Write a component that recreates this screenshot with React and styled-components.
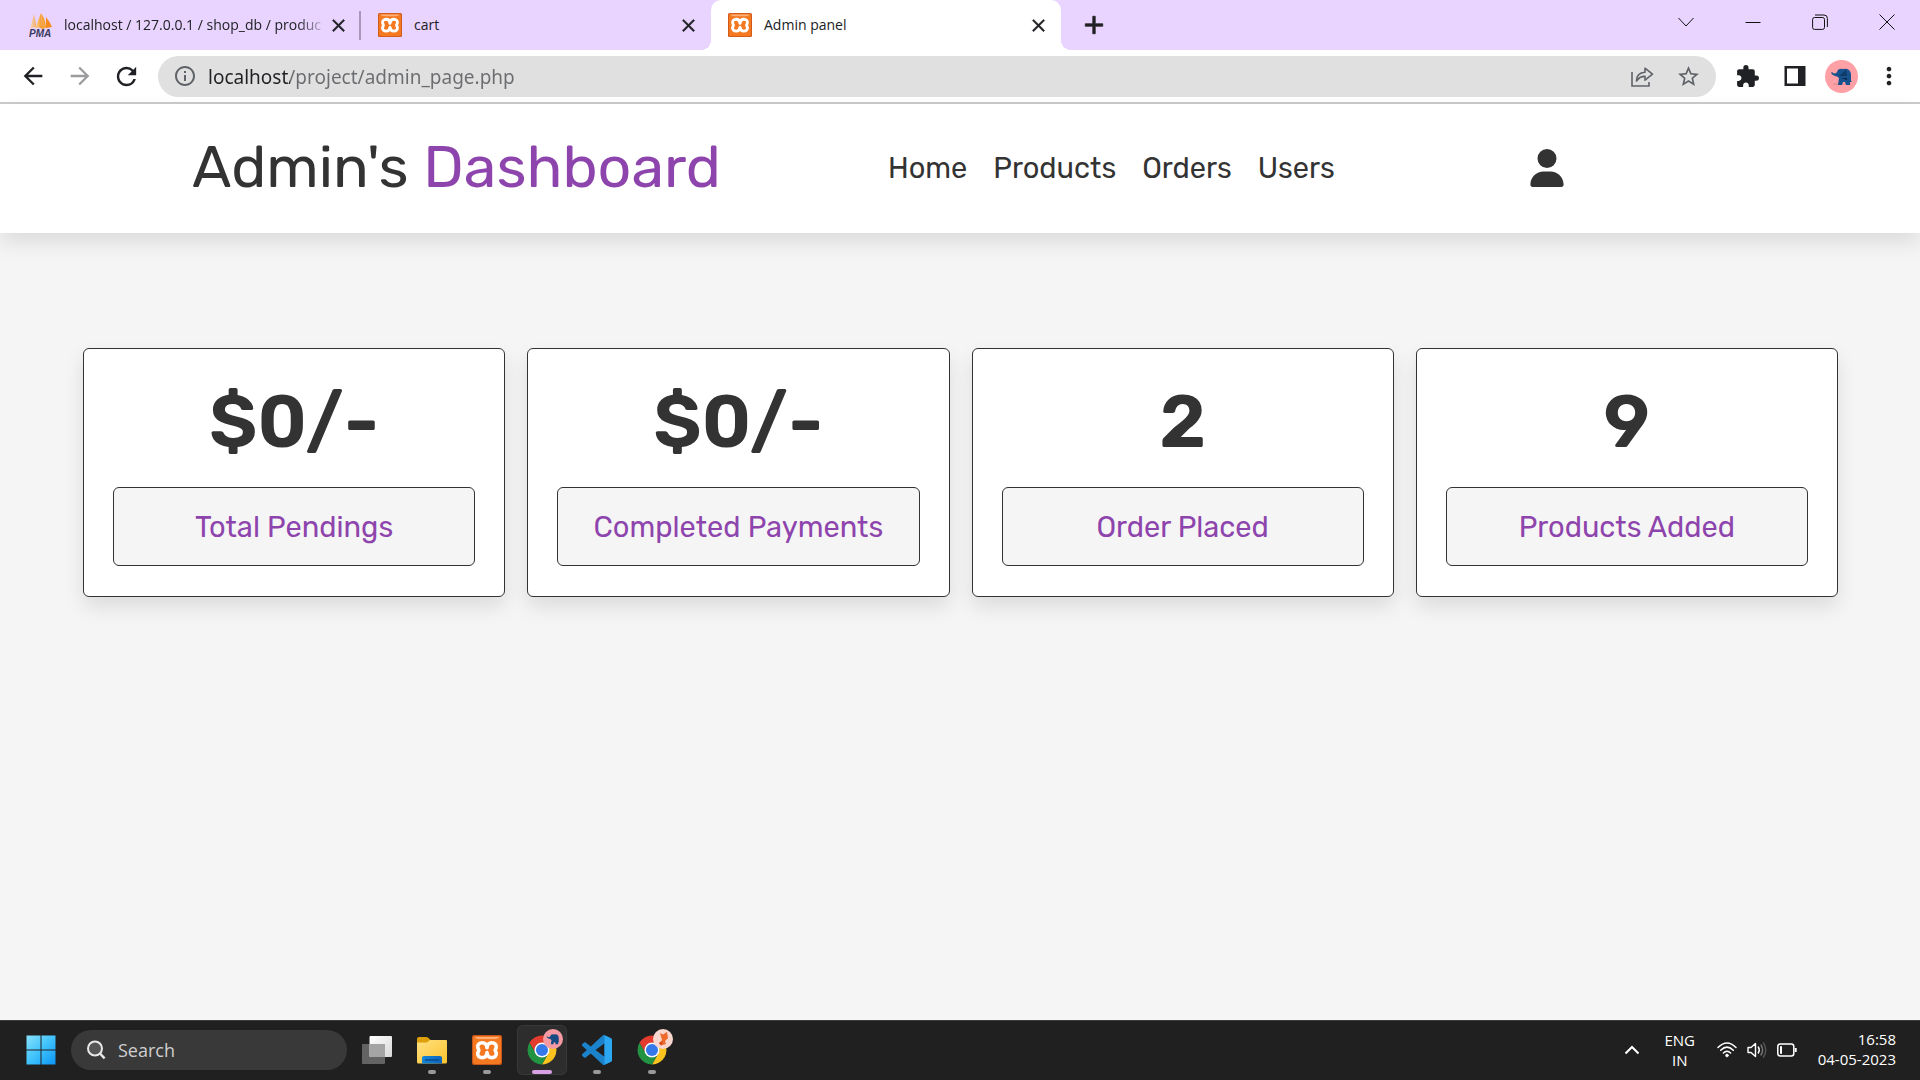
import React from "react";
import styled, { createGlobalStyle, css } from "styled-components";
import {
  MdArrowBack,
  MdArrowForward,
  MdRefresh,
  MdInfoOutline,
  MdStarBorder,
  MdExtension,
  MdMoreVert,
  MdClose,
  MdAdd,
} from "react-icons/md";
import { FaUser } from "react-icons/fa6";

const SYSTEM_FONT = `"Segoe UI", "Open Sans", "Noto Sans", sans-serif`;
const ADDRESS_FONT = `"Segoe UI", "Noto Sans", sans-serif`;
const PAGE_FONT = `"Rubik", "Roboto", sans-serif`;

const GlobalStyle = createGlobalStyle`
  *, *::before, *::after { box-sizing: border-box; }
  body { margin: 0; font-family: ${SYSTEM_FONT}; background: #f5f5f5; }
  button, input { font: inherit; color: inherit; }
  button { border: 0; padding: 0; background: none; cursor: pointer; }
  a { color: inherit; text-decoration: none; }
  svg { display: block; flex: none; }
`;

const Screen = styled.div`
  display: flex;
  flex-direction: column;
  min-height: 100vh;
`;

/* ---------- Browser tabs ---------- */

const TabStrip = styled.div`
  display: flex;
  align-items: stretch;
  height: 50px;
  padding-left: 11px;
  background: #e8d4ff;
`;

const TabBox = styled.div`
  position: relative;
  display: flex;
  align-items: center;
  flex: 0 1 350px;
  min-width: 0;
  gap: 4px;
  padding: 0 11px 0 17px;
  ${({ $divided }) =>
    $divided &&
    css`
      &::after {
        content: "";
        position: absolute;
        right: 0;
        top: 11px;
        width: 2px;
        height: 29px;
        background: #a898bb;
      }
    `}
  ${({ $active }) =>
    $active &&
    css`
      background: #fff;
      border-radius: 10px 10px 0 0;
      &::before,
      &::after {
        content: "";
        position: absolute;
        bottom: 0;
        width: 10px;
        height: 10px;
      }
      &::before {
        left: -10px;
        background: radial-gradient(circle at 0 0, transparent 10px, #fff 10px);
      }
      &::after {
        right: -10px;
        background: radial-gradient(circle at 100% 0, transparent 10px, #fff 10px);
      }
    `}
`;

const TabTitle = styled.span`
  flex: 1;
  min-width: 0;
  padding-left: 8px;
  overflow: hidden;
  white-space: nowrap;
  font-size: 14px;
  line-height: 20px;
  color: #202124;
  ${({ $faded }) =>
    $faded &&
    css`
      mask-image: linear-gradient(90deg, #000 calc(100% - 24px), rgba(0, 0, 0, 0.2));
    `}
`;

const SmallButton = styled.button`
  display: grid;
  place-items: center;
  width: 24px;
  height: 24px;
  flex: none;
  color: #202124;
  path:last-child {
    stroke: currentColor;
    stroke-width: 0.6px;
  }
`;

const NewTabButton = styled(SmallButton)`
  align-self: center;
  width: 30px;
  height: 30px;
  margin-left: 18px;
`;

const WindowControls = styled.div`
  display: flex;
  align-items: flex-start;
  margin-left: auto;
`;

const WindowButton = styled.button`
  display: grid;
  place-items: center;
  width: 67px;
  height: 43px;
  color: #111;
`;

/* ---------- Browser toolbar ---------- */

const Toolbar = styled.div`
  display: flex;
  align-items: center;
  gap: 8px;
  height: 54px;
  padding: 0 8px 0 9px;
  background: #fff;
  border-bottom: 2px solid #cbcbcb;
`;

const ToolGroup = styled.div`
  display: flex;
`;

const toolColors = { strong: "#202124", soft: "#5f6368", disabled: "#9c9c9e" };

const ToolButton = styled.button`
  display: grid;
  place-items: center;
  width: 47px;
  height: 40px;
  color: ${({ $tone = "strong" }) => toolColors[$tone]};
`;

const AddressBar = styled.form`
  display: flex;
  align-items: center;
  flex: 1;
  min-width: 0;
  height: 41px;
  padding: 0 4px 0 15px;
  border-radius: 21px;
  background: #e0e0e0;
  color: #5f6368;
`;

const AddressInput = styled.input`
  flex: 1;
  min-width: 0;
  height: 32px;
  margin-left: 11px;
  padding: 2px 0 0;
  border: 0;
  outline: 0;
  font-family: ${ADDRESS_FONT};
  font-size: 19px;
  color: transparent;
  background: linear-gradient(90deg, #202124 82px, #6b6c6f 82px);
  background-clip: text;
  -webkit-background-clip: text;
`;

/* ---------- Admin page ---------- */

const Page = styled.div`
  display: flex;
  flex-direction: column;
  flex: 1;
  background: #f5f5f5;
  font-family: ${PAGE_FONT};
  color: #333;
`;

const Header = styled.header`
  display: flex;
  align-items: center;
  justify-content: space-between;
  padding: 24px 354px 26px 192px;
  background: #fff;
  box-shadow: 0 10px 20px rgba(0, 0, 0, 0.1);
`;

const Logo = styled.a`
  font-size: 59px;
  line-height: 79px;
  white-space: nowrap;
  span {
    color: #8e44ad;
  }
`;

const Nav = styled.nav`
  display: flex;
`;

const NavLink = styled.a`
  margin-right: 26px;
  font-size: 29px;
  line-height: 36px;
`;

const UserButton = styled.button`
  color: #333;
`;

const Stats = styled.main`
  display: grid;
  grid-template-columns: repeat(4, 1fr);
  gap: 22px;
  padding: 115px 82px 40px 83px;
`;

const Card = styled.section`
  padding: 29px 29px 30px;
  border: 1px solid #333;
  border-radius: 6px;
  background: #fff;
  box-shadow: 0 10px 20px rgba(0, 0, 0, 0.1);
  text-align: center;
`;

const Value = styled.h3`
  margin: 0 0 20px;
  font-size: 74px;
  font-weight: 600;
  line-height: 89px;
`;

const Label = styled.p`
  margin: 0;
  padding: 21px 0 20px;
  border: 1px solid #333;
  border-radius: 6px;
  background: #f5f5f5;
  color: #8e44ad;
  font-size: 29px;
  line-height: 36px;
  white-space: nowrap;
`;

/* ---------- Taskbar ---------- */

const Taskbar = styled.footer`
  display: flex;
  align-items: center;
  gap: 5px;
  height: 60px;
  padding: 0 24px 1px 16px;
  background: #202020;
  border-top: 1px solid #3a3d3e;
  color: #fff;
`;

const TaskButton = styled.button`
  position: relative;
  display: grid;
  place-items: center;
  width: 50px;
  height: 50px;
  border-radius: 6px;
  background: ${({ $active }) => ($active ? "#2d2d2d" : "none")};
  box-shadow: ${({ $active }) => ($active ? "inset 0 0 0 1px #383838" : "none")};
  ${({ $running, $active }) =>
    $running &&
    css`
      &::after {
        content: "";
        position: absolute;
        bottom: 1px;
        left: 50%;
        width: ${$active ? 20 : 8}px;
        height: 4px;
        border-radius: 2px;
        background: ${$active ? "#d9a0e6" : "#999"};
        transform: translateX(-50%);
      }
    `}
`;

const SearchBox = styled.label`
  display: flex;
  align-items: center;
  gap: 12px;
  width: 276px;
  height: 40px;
  padding: 0 15px;
  border-radius: 20px;
  background: #393939;
  input {
    flex: 1;
    min-width: 0;
    padding: 0;
    border: 0;
    outline: 0;
    background: none;
    font-size: 18px;
  }
  input::placeholder {
    color: #cfcfcf;
    opacity: 1;
  }
`;

const Tray = styled.div`
  display: flex;
  align-items: center;
  gap: 16px;
  margin-left: auto;
  font-size: 15px;
  line-height: 20px;
`;

const TrayButton = styled.button`
  display: flex;
  align-items: center;
  justify-content: center;
  gap: 10px;
  min-width: 32px;
  height: 40px;
  padding: ${({ $wide }) => ($wide ? "0 5px" : "0")};
  line-height: 20px;
`;

const Clock = styled.time`
  padding-bottom: 2px;
  text-align: right;
`;

/* ---------- Drawings ---------- */

const PmaIcon = () => (
  <svg width="24" height="26" viewBox="0 0 24 26" aria-hidden="true">
    <defs>
      <linearGradient id="sail" x1="0" x2="1">
        <stop offset="0" stopColor="#fbd9a0" />
        <stop offset="1" stopColor="#f7941d" />
      </linearGradient>
    </defs>
    <path d="M6 2 L2 17 Q6 14 9 16 Z" fill="url(#sail)" opacity="0.7" />
    <path d="M13 1 L7 17 Q11 14 14 17 Z" fill="url(#sail)" />
    <path d="M13 1 Q18 8 18 16 L14 17 Z" fill="#f9a33c" />
    <path d="M18 5 Q22 10 24 15 L18 16 Z" fill="#f58a1f" />
    <text x="1" y="25" fontSize="10" fontWeight="700" fontStyle="italic" fontFamily="Liberation Sans, sans-serif" fill="#3a3a5c">
      PMA
    </text>
  </svg>
);

const XamppIcon = ({ size = 24 }) => (
  <svg width={size} height={size} viewBox="0 0 30 30" aria-hidden="true">
    <rect width="30" height="30" rx="2" fill="#c8541a" />
    <rect x="1" y="1" width="28" height="28" rx="2" fill="#f47920" />
    <path d="M3 2 H27 Q26 4 22 4 H8 Q4 4 3 2 Z" fill="#fbb07a" />
    <path
      d="M15 12.8 C14.6 9.4 13 7.8 10.4 7.8 C7 7.8 5.2 10 5.8 12.6 C6.1 13.8 6.8 14.2 6.8 15.2 C6.8 16.2 6.1 16.6 5.8 17.8 C5.2 20.4 7 22.6 10.4 22.6 C13 22.6 14.6 21 15 17.6 C15.4 21 17 22.6 19.6 22.6 C23 22.6 24.8 20.4 24.2 17.8 C23.9 16.6 23.2 16.2 23.2 15.2 C23.2 14.2 23.9 13.8 24.2 12.6 C24.8 10 23 7.8 19.6 7.8 C17 7.8 15.4 9.4 15 12.8 Z"
      fill="none"
      stroke="#fff"
      strokeWidth="3.6"
      strokeLinejoin="round"
    />
  </svg>
);

const elephantPath =
  "M7 12 Q10 15 12 12 Q13 8 18 9 Q25 8 26 14 L26 21 L27 22 L25 22 L25 25 L21 25 L20 22 L18 22 L17 25 L13 25 L14 18 Q12 16 10 16 Q7 15 6 13 Z";

const ProfileIcon = () => (
  <svg width="33" height="33" viewBox="0 0 33 33" aria-hidden="true">
    <circle cx="16.5" cy="16.5" r="16.5" fill="#ffa0a6" />
    <path d="M8 24 H26" stroke="#d9868e" strokeWidth="1" />
    <path d={elephantPath} fill="#17528f" />
    <path d="M14 16 L21 10 L22 16 Z" fill="#0f3a68" />
    <path d="M16 18 H22 V20 Z" fill="#0b2747" />
  </svg>
);

const ShareIcon = () => (
  <svg width="24" height="24" viewBox="0 0 24 24" fill="none" stroke="currentColor" strokeWidth="1.6" aria-hidden="true">
    <path d="M2 8 V22 H19 V18" />
    <path d="M6.5 17 C6.5 11.5 10 8.6 15 8.3 V4.2 L22.5 10.2 L15 16.2 V12.4 C11.5 12.2 8.8 13.6 6.5 17 Z" strokeLinejoin="round" />
  </svg>
);

const SidePanelIcon = () => (
  <svg width="22" height="22" viewBox="0 0 22 22" aria-hidden="true">
    <path fillRule="evenodd" fill="currentColor" d="M0.5 1 H21.5 V21 H0.5 Z M3 3.5 V18.5 H14 V3.5 Z" />
  </svg>
);

const LineIcon = ({ d, size = 16 }) => (
  <svg width={size} height={size} viewBox="0 0 16 16" fill="none" stroke="currentColor" strokeWidth="1" aria-hidden="true">
    <path d={d} />
  </svg>
);

const WindowsIcon = () => (
  <svg width="30" height="30" viewBox="0 0 30 30" aria-hidden="true">
    <defs>
      <linearGradient id="winblue" gradientUnits="userSpaceOnUse" x1="0" y1="0" x2="30" y2="30">
        <stop offset="0" stopColor="#8be2fd" />
        <stop offset="0.5" stopColor="#3fc2fb" />
        <stop offset="1" stopColor="#0a93f5" />
      </linearGradient>
    </defs>
    <path fill="url(#winblue)" d="M0.5 0.5 H14.5 V14.5 H0.5 Z M15.5 0.5 H29.5 V14.5 H15.5 Z M0.5 15.5 H14.5 V29.5 H0.5 Z M15.5 15.5 H29.5 V29.5 H15.5 Z" />
  </svg>
);

const SearchIcon = () => (
  <svg width="20" height="20" viewBox="0 0 20 20" fill="none" stroke="#e8e8e8" aria-hidden="true">
    <circle cx="9" cy="8.5" r="7" fill="#555" strokeWidth="2" />
    <path d="M14 13.5 L18.6 18.4" strokeWidth="2.4" />
  </svg>
);

const TaskViewIcon = () => (
  <svg width="30" height="30" viewBox="0 0 30 30" aria-hidden="true">
    <defs>
      <linearGradient id="pane" x1="0" y1="0" x2="1" y2="1">
        <stop offset="0" stopColor="#fff" />
        <stop offset="1" stopColor="#d8d8d8" />
      </linearGradient>
    </defs>
    <rect x="0" y="9" width="23" height="20" rx="1" fill="#636363" />
    <rect x="7.5" y="1" width="22.5" height="21" rx="1" fill="url(#pane)" />
    <rect x="7.5" y="9" width="15.5" height="13" fill="#a4a4a4" />
  </svg>
);

const FolderIcon = () => (
  <svg width="30" height="30" viewBox="0 0 30 30" aria-hidden="true">
    <defs>
      <linearGradient id="folder" x1="0" y1="0" x2="1" y2="1">
        <stop offset="0" stopColor="#ffe083" />
        <stop offset="1" stopColor="#fcc42c" />
      </linearGradient>
      <linearGradient id="stand" x1="0" y1="0" x2="1" y2="0">
        <stop offset="0" stopColor="#1687d8" />
        <stop offset="1" stopColor="#0c65bb" />
      </linearGradient>
    </defs>
    <path d="M0 4 Q0 2 2 2 H9 Q10.5 2 11.5 3 L14 5.5 L11 8 H0 Z" fill="#dd9f0c" />
    <path d="M0 7.5 H10 L13 5 H29 Q30 5 30 6 V27 Q30 28.5 28.5 28.5 H1.5 Q0 28.5 0 27 Z" fill="url(#folder)" />
    <path d="M5 28.5 V23 Q5 21 7 21 H23 Q25 21 25 23 V28.5 Z" fill="url(#stand)" />
    <path d="M8.5 25 H21.5" stroke="#0a4a8f" strokeWidth="1.4" strokeLinecap="round" />
  </svg>
);

const ChromeIcon = ({ badge }) => (
  <svg width="50" height="50" viewBox="0 0 50 50" aria-hidden="true">
    <g transform="translate(9.2 9.2) scale(0.658)">
      <path d="M4.95 13 A22 22 0 0 1 43.05 13 L24 13 A11 11 0 0 0 14.47 29.5 Z" fill="#e33b2e" />
      <path d="M43.05 13 A22 22 0 0 1 24 46 L33.53 29.5 A11 11 0 0 0 24 13 Z" fill="#fcc31e" />
      <path d="M24 46 A22 22 0 0 1 4.95 13 L14.47 29.5 A11 11 0 0 0 33.53 29.5 Z" fill="#229342" />
      <circle cx="24" cy="24" r="11.5" fill="#fff" />
      <circle cx="24" cy="24" r="9.2" fill="#3478ea" />
    </g>
    {badge === "elephant" ? (
      <g transform="translate(26 4) scale(0.606)">
        <circle cx="16.5" cy="16.5" r="16.5" fill="#f59aa2" />
        <path d={elephantPath} fill="#174a82" />
      </g>
    ) : (
      <g transform="translate(26 4)">
        <circle cx="10" cy="10" r="10" fill="#f8d5cd" />
        <path d="M7 4 L10 5.5 L14 3 L15 9 L12 12 L13 15 L8 16.5 L6 14 L9 11 Z" fill="#ee6a2b" />
        <path d="M6 14 L10 12.5 L8 16.5 Z" fill="#c9481a" />
      </g>
    )}
  </svg>
);

const VsCodeIcon = () => (
  <svg width="30" height="30" viewBox="0 0 100 100" aria-hidden="true">
    <path
      fill="#1a83cc"
      d="M96.46 10.8 75.86.87a6.23 6.23 0 0 0-7.1 1.2L29.35 38.04 12.19 25.01a4.16 4.16 0 0 0-5.32.24L1.36 30.26a4.17 4.17 0 0 0 0 6.16L16.25 50 1.36 63.58a4.17 4.17 0 0 0 0 6.16l5.51 5.01a4.16 4.16 0 0 0 5.32.24l17.16-13.03 39.41 35.96a6.22 6.22 0 0 0 7.1 1.2l20.6-9.91A6.25 6.25 0 0 0 100 83.58V16.41a6.25 6.25 0 0 0-3.54-5.61zM75.01 72.7 45.11 50l29.9-22.7z"
    />
    <path fill="#2ba6f1" d="M75 0.6 L96.5 10.8 Q100 12.5 100 16.4 V83.6 Q100 87.5 96.5 89.2 L75 99.4 Z" />
  </svg>
);

const WifiIcon = () => (
  <svg width="20" height="20" viewBox="0 0 20 20" fill="none" stroke="#fff" strokeWidth="1.5" strokeLinecap="round" aria-hidden="true">
    <path d="M1 7.5 Q10 -1.5 19 7.5" />
    <path d="M3.7 10.3 Q10 4 16.3 10.3" />
    <path d="M6.4 13 Q10 9.4 13.6 13" />
    <circle cx="10" cy="15.5" r="1.4" fill="#fff" strokeWidth="0.6" />
  </svg>
);

const VolumeIcon = () => (
  <svg width="20" height="20" viewBox="0 0 20 20" fill="none" stroke="#fff" strokeWidth="1.4" strokeLinecap="round" strokeLinejoin="round" aria-hidden="true">
    <path d="M1 7.5 H4 L8.5 3.5 V16.5 L4 12.5 H1 Z" />
    <path d="M11.3 7 Q13.3 10 11.3 13" />
    <path d="M14 5 Q17.2 10 14 15" stroke="#777" />
    <path d="M16.5 2.8 Q21 10 16.5 17.2" stroke="#555" />
  </svg>
);

const BatteryIcon = () => (
  <svg width="20" height="20" viewBox="0 0 20 20" fill="none" stroke="#fff" strokeWidth="1.5" aria-hidden="true">
    <rect x="0.8" y="4" width="16" height="12" rx="2.5" />
    <rect x="3" y="6.2" width="2" height="7.6" fill="#fff" stroke="none" />
    <path d="M18.7 8 V12" strokeWidth="2" />
  </svg>
);

/* ---------- Composition ---------- */

const tabs = [
  { title: "localhost / 127.0.0.1 / shop_db / produc", icon: <PmaIcon />, divided: true, faded: true },
  { title: "cart", icon: <XamppIcon /> },
  { title: "Admin panel", icon: <XamppIcon />, active: true },
];

const controls = [
  { name: "Search tabs", d: "M0.5 4 L8 12 L15.5 4" },
  { name: "Minimize", d: "M0.5 8.5 H15.5" },
  {
    name: "Restore",
    d: "M2.5 3.5 H10.5 Q12.5 3.5 12.5 5.5 V13.5 Q12.5 15.4 10.5 15.4 H2.5 Q0.6 15.4 0.6 13.5 V5.5 Q0.6 3.5 2.5 3.5 Z M3 1 H12 Q15.4 1 15.4 4.4 V13",
  },
  { name: "Close", d: "M0.5 0.5 L15.5 15.5 M15.5 0.5 L0.5 15.5" },
];

const navItems = ["Home", "Products", "Orders", "Users"];

const stats = [
  { value: "$0/-", label: "Total Pendings" },
  { value: "$0/-", label: "Completed Payments" },
  { value: "2", label: "Order Placed" },
  { value: "9", label: "Products Added" },
];

const apps = [
  { name: "Task View", icon: <TaskViewIcon /> },
  { name: "File Explorer", icon: <FolderIcon />, running: true },
  { name: "XAMPP", icon: <XamppIcon size={30} />, running: true },
  { name: "Chrome", icon: <ChromeIcon badge="elephant" />, running: true, active: true },
  { name: "VS Code", icon: <VsCodeIcon />, running: true },
  { name: "Chrome, second profile", icon: <ChromeIcon badge="fox" />, running: true },
];

export default function App() {
  return (
    <Screen>
      <GlobalStyle />
      <TabStrip>
        {tabs.map((tab) => (
          <TabBox key={tab.title} $active={tab.active} $divided={tab.divided}>
            {tab.icon}
            <TabTitle $faded={tab.faded}>{tab.title}</TabTitle>
            <SmallButton aria-label={`Close ${tab.title}`}>
              <MdClose size={21} />
            </SmallButton>
          </TabBox>
        ))}
        <NewTabButton aria-label="New tab">
          <MdAdd size={30} />
        </NewTabButton>
        <WindowControls>
          {controls.map((control) => (
            <WindowButton key={control.name} aria-label={control.name}>
              <LineIcon d={control.d} />
            </WindowButton>
          ))}
        </WindowControls>
      </TabStrip>

      <Toolbar>
        <ToolGroup>
          <ToolButton aria-label="Back">
            <MdArrowBack size={28} />
          </ToolButton>
          <ToolButton aria-label="Forward" $tone="disabled">
            <MdArrowForward size={28} />
          </ToolButton>
          <ToolButton aria-label="Reload">
            <MdRefresh size={29} />
          </ToolButton>
        </ToolGroup>
        <AddressBar onSubmit={(event) => event.preventDefault()}>
          <MdInfoOutline size={24} />
          <AddressInput aria-label="Address" defaultValue="localhost/project/admin_page.php" />
          <ToolButton type="button" aria-label="Share" $tone="soft">
            <ShareIcon />
          </ToolButton>
          <ToolButton type="button" aria-label="Bookmark" $tone="soft">
            <MdStarBorder size={25} />
          </ToolButton>
        </AddressBar>
        <ToolGroup>
          <ToolButton aria-label="Extensions">
            <MdExtension size={25} />
          </ToolButton>
          <ToolButton aria-label="Side panel">
            <SidePanelIcon />
          </ToolButton>
          <ToolButton aria-label="Profile">
            <ProfileIcon />
          </ToolButton>
          <ToolButton aria-label="Menu">
            <MdMoreVert size={28} />
          </ToolButton>
        </ToolGroup>
      </Toolbar>

      <Page>
        <Header>
          <Logo href="#dashboard">
            Admin's <span>Dashboard</span>
          </Logo>
          <Nav>
            {navItems.map((item) => (
              <NavLink key={item} href={`#${item.toLowerCase()}`}>
                {item}
              </NavLink>
            ))}
          </Nav>
          <UserButton aria-label="Account">
            <FaUser size={38} />
          </UserButton>
        </Header>
        <Stats>
          {stats.map((stat) => (
            <Card key={stat.label}>
              <Value>{stat.value}</Value>
              <Label>{stat.label}</Label>
            </Card>
          ))}
        </Stats>
      </Page>

      <Taskbar>
        <TaskButton aria-label="Start">
          <WindowsIcon />
        </TaskButton>
        <SearchBox>
          <SearchIcon />
          <input type="text" placeholder="Search" aria-label="Search" />
        </SearchBox>
        {apps.map((app) => (
          <TaskButton key={app.name} aria-label={app.name} $running={app.running} $active={app.active}>
            {app.icon}
          </TaskButton>
        ))}
        <Tray>
          <TrayButton aria-label="Show hidden icons">
            <svg width="16" height="10" viewBox="0 0 16 10" fill="none" stroke="#fff" strokeWidth="2" aria-hidden="true">
              <path d="M1.5 8.5 L8 2 L14.5 8.5" />
            </svg>
          </TrayButton>
          <TrayButton>
            ENG
            <br />
            IN
          </TrayButton>
          <TrayButton aria-label="Network, volume and battery" $wide>
            <WifiIcon />
            <VolumeIcon />
            <BatteryIcon />
          </TrayButton>
          <Clock dateTime="2023-05-04T16:58">
            16:58
            <br />
            04-05-2023
          </Clock>
        </Tray>
      </Taskbar>
    </Screen>
  );
}
